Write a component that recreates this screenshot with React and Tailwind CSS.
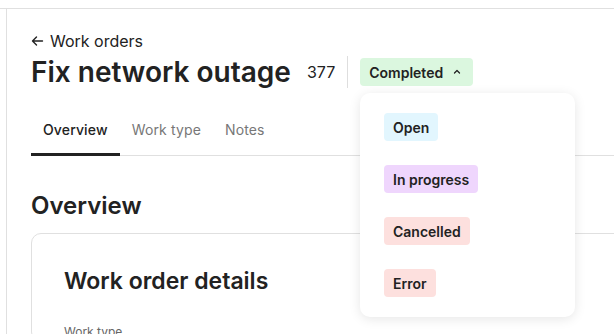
import React from "react";

function Badge({ className, children }) {
  return (
    <span className={`inline-flex h-[28px] items-center rounded-[4px] px-[9px] text-[14px] font-semibold text-[#222] ${className}`}>
      {children}
    </span>
  );
}

export default function App() {
  return (
    <div className="relative h-[334px] w-[614px] overflow-hidden bg-white text-[#222]" style={{ fontFamily: "Inter, 'Noto Sans', sans-serif" }}>
      <div className="h-[9px] border-b border-[#e0e0e0]" />
      <div className="flex">
        <div className="h-[400px] w-[7px] shrink-0 border-r border-[#e0e0e0]" />
        <main className="flex-1 pl-6 pt-[22px]">
          <div className="flex items-center gap-[6px] text-[16px] leading-5 text-[#222]">
            <svg width="13" height="12" viewBox="0 0 13 12" fill="none" stroke="#222" strokeWidth="1.4" strokeLinecap="round" strokeLinejoin="round">
              <path d="M11.5 6H1.5M5.5 2L1.5 6l4 4" />
            </svg>
            <span>Work orders</span>
          </div>
          <div className="mt-[3px] flex items-center">
            <h1 className="text-[28px] font-semibold leading-[36px] text-[#222]">Fix network outage</h1>
            <span className="ml-4 text-[16px] text-[#222]">377</span>
            <div className="ml-3 h-[32px] w-px bg-[#dedede]" />
            <div className="ml-3 flex h-[28px] items-center gap-[10px] rounded-[4px] bg-[#dbf7df] pl-[9px] pr-[12px] text-[14px] font-semibold">
              <span>Completed</span>
              <svg width="8" height="6" viewBox="0 0 8 6" fill="none" stroke="#222" strokeWidth="1.3" strokeLinecap="round" strokeLinejoin="round">
                <path d="M1.5 4L4 1.5 6.5 4" />
              </svg>
            </div>
          </div>
          <div className="mt-[29px] flex border-b border-[#e0e0e0] text-[14px] tracking-[0.01em]">
            <div className="-mb-px border-b-[3px] border-[#222] px-3 pb-[13px] font-medium text-[#222]">Overview</div>
            <div className="px-3 pb-[13px] text-[#777]">Work type</div>
            <div className="px-3 pb-[13px] text-[#777]">Notes</div>
          </div>
          <h2 className="mt-[34px] text-[24px] font-semibold leading-8">Overview</h2>
          <div className="mr-[-30px] mt-[11px] rounded-[10px] border border-[#e0e0e0] px-8 pt-[31px]">
            <h3 className="text-[23px] font-semibold leading-8">Work order details</h3>
            <div className="mt-[26px] text-[12px] text-[#666]">Work type</div>
          </div>
        </main>
      </div>
      <div className="absolute left-[360px] top-[93px] w-[215px] rounded-[10px] bg-white py-2 shadow-[0_2px_12px_rgba(0,0,0,0.10)]">
        <div className="px-6 py-3"><Badge className="bg-[#e2f6fe]">Open</Badge></div>
        <div className="px-6 py-3"><Badge className="bg-[#efd6fd]">In progress</Badge></div>
        <div className="px-6 py-3"><Badge className="bg-[#fde0de]">Cancelled</Badge></div>
        <div className="px-6 py-3"><Badge className="bg-[#fde0de]">Error</Badge></div>
      </div>
    </div>
  );
}
